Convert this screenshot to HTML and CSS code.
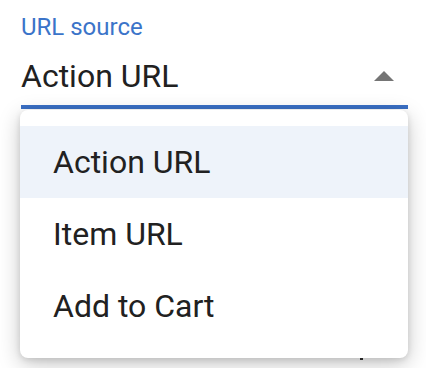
FILE: index.html
```html
<!DOCTYPE html>
<html>
<head>
<meta charset="utf-8">
<link rel="stylesheet" href="styles.css">
</head>
<body>
<div class="field">
  <div class="label">URL source</div>
  <div class="select">
    <span class="value">Action URL</span>
    <svg class="arrow" width="20" height="10" viewBox="0 0 20 10"><path d="M0 10 L10 0 L20 10 Z" fill="#757575"/></svg>
  </div>
  <div class="underline"></div>
  <div class="menu">
    <div class="item selected">Action URL</div>
    <div class="item">Item URL</div>
    <div class="item">Add to Cart</div>
  </div>
  <div class="dot"></div>
</div>
</body>
</html>
```

FILE: styles.css
```css
html, body {
  margin: 0;
  padding: 0;
  background: #ffffff;
}
body {
  font-family: Roboto, "Liberation Sans", sans-serif;
  width: 426px;
  height: 368px;
  overflow: hidden;
}
.field {
  position: relative;
  padding: 14px 18px 0 21px;
}
.label {
  color: #3b74c9;
  font-size: 24px;
  line-height: 26px;
}
.select {
  display: flex;
  align-items: flex-start;
  justify-content: space-between;
  height: 65px;
  padding-right: 14px;
}
.value {
  color: #212121;
  font-size: 32px;
  line-height: 40px;
  margin-top: 16px;
}
.arrow {
  display: block;
  margin-top: 31px;
}
.underline {
  height: 4px;
  background: #3a6fc4;
}
.menu {
  position: absolute;
  left: 20px;
  top: 110px;
  width: 388px;
  padding: 16px 0;
  background: #ffffff;
  border-radius: 8px;
  box-shadow: 0 6px 22px rgba(0,0,0,0.22), 0 2px 6px rgba(0,0,0,0.12);
  z-index: 2;
}
.item {
  height: 72px;
  display: flex;
  align-items: center;
  padding-left: 33px;
  font-size: 32px;
  color: #212121;
}
.item.selected {
  background: #eef3fa;
}
.dot {
  position: absolute;
  left: 360px;
  top: 357px;
  width: 3px;
  height: 3px;
  background: #333;
  z-index: 1;
}
```
